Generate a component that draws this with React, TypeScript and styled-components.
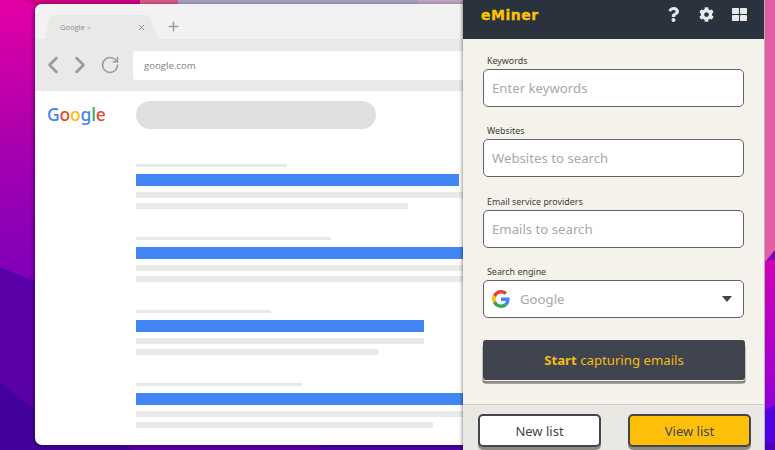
import React from "react";
import styled, { createGlobalStyle } from "styled-components";
import { ChevronLeft, ChevronRight, RotateCw, X, Plus } from "lucide-react";
import { FaQuestion, FaCog, FaThLarge } from "react-icons/fa";

const Global = createGlobalStyle`
  html, body { margin: 0; padding: 0; background: #4a00a0; }
  * { box-sizing: border-box; }
`;

const Stage = styled.div`
  position: relative;
  width: 775px;
  height: 450px;
  overflow: hidden;
  font-family: "Noto Sans", sans-serif;
`;

const Wallpaper = styled.svg`
  position: absolute;
  inset: 0;
  width: 775px;
  height: 450px;
`;

const BrowserWindow = styled.div`
  position: absolute;
  left: 35px;
  top: 4px;
  width: 470px;
  height: 441px;
  background: #fff;
  border-radius: 7px;
  overflow: hidden;
  box-shadow: -1px 1px 4px rgba(20, 0, 60, 0.55);
  display: flex;
  flex-direction: column;
  font-family: "Open Sans", sans-serif;
`;

const TabStrip = styled.div`
  flex: none;
  height: 35px;
  background: #f2f2f2;
  padding: 11px 0 0 10px;
  display: flex;
  align-items: flex-start;
  gap: 8px;
  color: #999;
`;

const Tab = styled.div`
  width: 113px;
  height: 24px;
  background: #e9e9e8;
  clip-path: polygon(0 100%, 4px 4px, 7px 0, 103px 0, 106px 4px, 113px 100%);
  display: flex;
  align-items: center;
  padding-left: 15px;
  font-size: 7.5px;
  color: #8c8c8c;
`;

const TabTitle = styled.span`
  width: 27px;
`;

const TabMark = styled.span`
  flex: 1;
  font-size: 7px;
  color: #aaa;
`;

const TabClose = styled(X)`
  margin-right: 12px;
`;

const NewTab = styled(Plus)`
  margin-top: 4px;
`;

const Toolbar = styled.div`
  flex: none;
  height: 52px;
  background: #e9e9e7;
  display: flex;
  align-items: center;
  padding: 0 0 0 4px;
  color: #9a9a9a;
`;

const NavButton = styled.span<{ $mr: number }>`
  display: flex;
  margin-right: ${(p) => p.$mr}px;
`;

const Address = styled.div`
  flex: 1;
  height: 29px;
  background: #fff;
  border-radius: 3px;
  display: flex;
  align-items: center;
  padding-left: 11px;
  font-size: 9.6px;
  color: #7f7f7f;
`;

const Page = styled.div`
  flex: 1;
  position: relative;
  padding: 10px 0 0 12px;
  display: flex;
`;

const Logo = styled.div`
  flex: none;
  width: 89px;
  font-family: "Noto Sans", sans-serif;
  font-size: 17.5px;
  line-height: 26px;
  font-weight: 500;
  letter-spacing: -0.2px;
`;

const Letter = styled.span<{ $c: string }>`
  color: ${(p) => p.$c};
`;

const Results = styled.div`
  flex: 1;
  display: flex;
  flex-direction: column;
`;

const SearchPill = styled.div`
  flex: none;
  width: 240px;
  height: 28px;
  background: #dfdfdf;
  border-radius: 14px;
  margin-bottom: 35px;
`;

const ResultGroup = styled.div`
  flex: none;
  display: flex;
  flex-direction: column;
  margin-bottom: 28px;
`;

const Crumb = styled.div<{ $w: number }>`
  width: ${(p) => p.$w}px;
  height: 3px;
  background: #e9e9e7;
  margin-bottom: 7px;
`;

const TitleBar = styled.div<{ $w: number }>`
  width: ${(p) => p.$w}px;
  height: 12px;
  background: #4285f4;
  margin-bottom: 6px;
`;

const SnippetBar = styled.div<{ $w: number; $last?: boolean }>`
  width: ${(p) => p.$w}px;
  height: 6px;
  background: #e9e9e7;
  margin-bottom: ${(p) => (p.$last ? 0 : 5)}px;
`;

const Panel = styled.div`
  position: absolute;
  left: 463px;
  top: 0;
  width: 301px;
  height: 450px;
  background: #f5f2eb;
  box-shadow: -1px 0 3px rgba(0, 0, 0, 0.4), 1px 0 0 #c9c4bd;
  display: flex;
  flex-direction: column;
`;

const PanelHeader = styled.div`
  flex: none;
  height: 39px;
  background: #2a323e;
  display: flex;
  align-items: center;
  padding: 0 17px 10px 18px;
  color: #e9e9e9;
`;

const Brand = styled.div`
  flex: 1;
  color: #fdc300;
  font-family: "DejaVu Sans", sans-serif;
  font-weight: 700;
  font-size: 14px;
  letter-spacing: 0.5px;
  line-height: 16px;
  -webkit-text-stroke: 0.3px #fdc300;
`;

const HeaderIcons = styled.div`
  display: flex;
  align-items: center;
  gap: 18px;
`;

const Form = styled.div`
  flex: 1;
  padding: 15px 20px 0;
  display: flex;
  flex-direction: column;
  gap: 17.4px;
`;

const FieldGroup = styled.div`
  flex: none;
  display: flex;
  flex-direction: column;
`;

const Label = styled.div`
  font-size: 8.9px;
  line-height: 12px;
  margin: 1px 0 2px 4px;
  color: #3d3d3d;
`;

const Field = styled.div`
  width: 261px;
  height: 38px;
  background: #fff;
  border: 1px solid #62626a;
  border-radius: 5px;
  display: flex;
  align-items: center;
  padding: 0 11px 0 8px;
  font-size: 13.2px;
  color: #a8a8a8;
`;

const EngineName = styled.span`
  flex: 1;
  margin-left: 10px;
`;

const Caret = styled.span`
  width: 0;
  height: 0;
  border-left: 5.5px solid transparent;
  border-right: 5.5px solid transparent;
  border-top: 6px solid #444;
`;

const StartButton = styled.div`
  flex: none;
  width: 262px;
  height: 40px;
  margin-top: 4.6px;
  background: #40444f;
  border-radius: 3px;
  box-shadow: 0 1px 0 #f5f2eb, -1px 4px 0 -0.5px #8d8983, 1px 4px 0 -0.5px #8d8983;
  display: flex;
  align-items: center;
  justify-content: center;
  font-size: 13.2px;
  color: #f5bb16;
  white-space: pre;
`;

const Strong = styled.b`
  font-weight: 700;
`;

const Footer = styled.div`
  flex: none;
  height: 46px;
  background: #e9e8e2;
  border-top: 1px solid #cfccc6;
  display: flex;
  justify-content: space-between;
  padding: 9px 13px 0 15px;
`;

const FooterButton = styled.div<{ $primary?: boolean }>`
  width: 123px;
  height: 33px;
  background: ${(p) => (p.$primary ? "#fdbf0a" : "#fff")};
  border: 2px solid #45454d;
  border-radius: 5px;
  box-shadow: 0 3px 0 #8d8983;
  display: flex;
  align-items: center;
  justify-content: center;
  font-size: 13px;
  color: #444;
`;

const GoogleG = () => (
  <svg width="18" height="18" viewBox="0 0 48 48" aria-hidden="true">
    <path fill="#EA4335" d="M24 9.5c3.5 0 6.7 1.2 9.2 3.6l6.9-6.9C35.9 2.4 30.5 0 24 0 14.6 0 6.5 5.4 2.6 13.2l8 6.2C12.5 13.7 17.8 9.5 24 9.5z" />
    <path fill="#4285F4" d="M47 24.5c0-1.6-.2-3.1-.4-4.5H24v9h12.9c-.6 3-2.2 5.5-4.8 7.2l7.7 6c4.5-4.2 7.2-10.4 7.2-17.7z" />
    <path fill="#FBBC05" d="M10.5 28.6c-.5-1.4-.8-3-.8-4.6s.3-3.2.8-4.6l-8-6.2C.9 16.5 0 20.1 0 24s.9 7.5 2.6 10.8l7.9-6.2z" />
    <path fill="#34A853" d="M24 48c6.5 0 11.9-2.1 15.9-5.8l-7.7-6c-2.2 1.5-4.9 2.3-8.2 2.3-6.2 0-11.5-4.2-13.4-9.9l-8 6.2C6.5 42.6 14.6 48 24 48z" />
  </svg>
);

const results = [
  { crumb: 151, title: 323, a: 330, b: 272 },
  { crumb: 195, title: 340, a: 340, b: 340 },
  { crumb: 135, title: 288, a: 288, b: 242 },
  { crumb: 166, title: 340, a: 340, b: 297 },
];

export default function App() {
  return (
    <Stage>
      <Global />
      <Wallpaper viewBox="0 0 775 450" aria-hidden="true">
        <defs>
          <linearGradient id="left" x1="0" y1="0" x2="0" y2="1">
            <stop offset="0" stopColor="#e400a4" />
            <stop offset="0.36" stopColor="#a200b0" />
            <stop offset="0.6" stopColor="#8200ba" />
            <stop offset="1" stopColor="#6a00ae" />
          </linearGradient>
          <linearGradient id="right" x1="0" y1="0" x2="0" y2="1">
            <stop offset="0" stopColor="#d000b8" />
            <stop offset="0.6" stopColor="#a600d2" />
            <stop offset="1" stopColor="#7a00dc" />
          </linearGradient>
        </defs>
        <rect width="775" height="450" fill="url(#left)" />
        <polygon points="0,267 60,292 775,520 0,520" fill="#5a00a8" />
        <polygon points="0,383 40,413 775,700 0,700" fill="#44009a" />
        <rect x="500" y="260" width="275" height="190" fill="url(#right)" />
        <polygon points="755,415 775,405 775,450 755,450" fill="#5000e2" />
        <polygon points="320,443 775,443 775,450 320,450" fill="#4a00ac" opacity="0.7" />
        <polygon points="500,0 775,0 775,250 765,262 500,262" fill="#e55ca9" />
        <polygon points="25,0 140,0 140,5 35,5" fill="#c8007f" />
        <polygon points="140,0 178,0 178,5 140,5" fill="#d8587e" />
        <rect x="178" width="240" height="5" fill="#a7a0c0" />
        <rect x="418" width="50" height="5" fill="#bfa4c2" />
      </Wallpaper>

      <BrowserWindow>
        <TabStrip>
          <Tab>
            <TabTitle>Google</TabTitle>
            <TabMark>»</TabMark>
            <TabClose size={9} strokeWidth={2.6} />
          </Tab>
          <NewTab size={15} strokeWidth={2.2} />
        </TabStrip>
        <Toolbar>
          <NavButton $mr={-1}>
            <ChevronLeft size={28} strokeWidth={2.2} />
          </NavButton>
          <NavButton $mr={6}>
            <ChevronRight size={28} strokeWidth={2.2} />
          </NavButton>
          <NavButton $mr={13}>
            <RotateCw size={20} strokeWidth={1.9} />
          </NavButton>
          <Address>google.com</Address>
        </Toolbar>
        <Page>
          <Logo>
            <Letter $c="#4285f4">G</Letter>
            <Letter $c="#ea4335">o</Letter>
            <Letter $c="#fbbc05">o</Letter>
            <Letter $c="#4285f4">g</Letter>
            <Letter $c="#34a853">l</Letter>
            <Letter $c="#ea4335">e</Letter>
          </Logo>
          <Results>
            <SearchPill />
            {results.map((r) => (
              <ResultGroup key={r.crumb}>
                <Crumb $w={r.crumb} />
                <TitleBar $w={r.title} />
                <SnippetBar $w={r.a} />
                <SnippetBar $w={r.b} $last />
              </ResultGroup>
            ))}
          </Results>
        </Page>
      </BrowserWindow>

      <Panel>
        <PanelHeader>
          <Brand>eMiner</Brand>
          <HeaderIcons>
            <FaQuestion size={15} />
            <FaCog size={15} />
            <FaThLarge size={15} />
          </HeaderIcons>
        </PanelHeader>
        <Form>
          <FieldGroup>
            <Label>Keywords</Label>
            <Field>Enter keywords</Field>
          </FieldGroup>
          <FieldGroup>
            <Label>Websites</Label>
            <Field>Websites to search</Field>
          </FieldGroup>
          <FieldGroup>
            <Label>Email service providers</Label>
            <Field>Emails to search</Field>
          </FieldGroup>
          <FieldGroup>
            <Label>Search engine</Label>
            <Field>
              <GoogleG />
              <EngineName>Google</EngineName>
              <Caret />
            </Field>
          </FieldGroup>
          <StartButton>
            <Strong>Start</Strong> capturing emails
          </StartButton>
        </Form>
        <Footer>
          <FooterButton>New list</FooterButton>
          <FooterButton $primary>View list</FooterButton>
        </Footer>
      </Panel>
    </Stage>
  );
}
